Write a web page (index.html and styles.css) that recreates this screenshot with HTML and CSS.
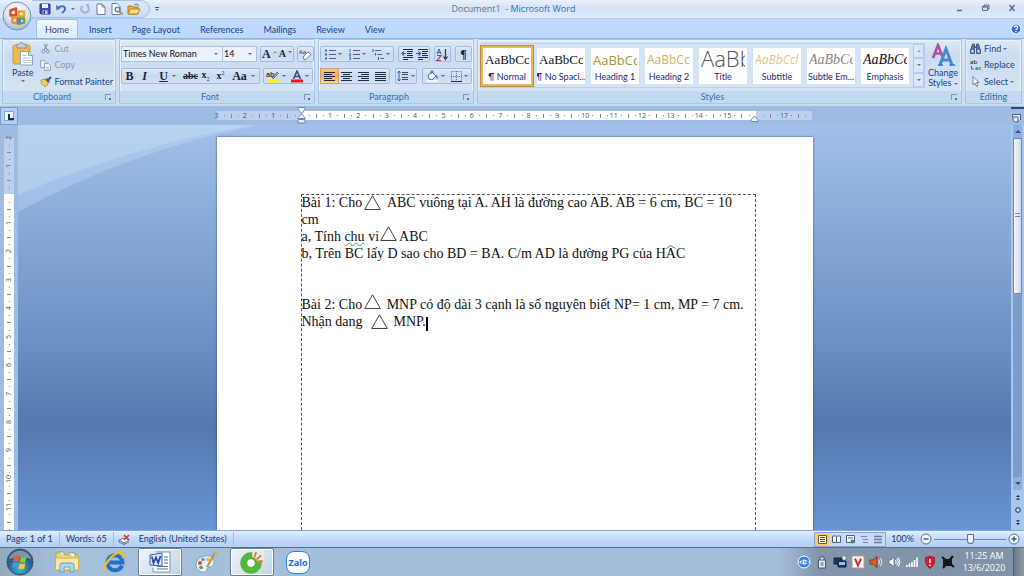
FILE: index.html
```html
<!DOCTYPE html>
<html lang="en">
<head>
<meta charset="utf-8">
<title>Document1 - Microsoft Word</title>
<link rel="stylesheet" href="styles.css">
</head>
<body>
<header class="titlebar">
  <button class="office" aria-label="Office Button">
    <svg width="30" height="30" viewBox="0 0 30 30">
      <defs><radialGradient id="orb" cx=".5" cy=".3" r=".8"><stop offset="0" stop-color="#fff"/><stop offset=".55" stop-color="#dbe2ec"/><stop offset="1" stop-color="#8fa3bf"/></radialGradient></defs>
      <circle cx="15" cy="15" r="14" fill="url(#orb)" stroke="#7890b4"/>
      <g fill="none" stroke-width="2.600" stroke-linejoin="round">
        <path d="M8.500 9.500l5.500-2v6.500l-5.500 .5z" stroke="#dc4f25"/>
        <path d="M16.500 10.500h5.500v5h-5.500z" stroke="#f2a32c"/>
        <path d="M10.500 16.500h4.500v6l-4.500-1z" stroke="#e9902a"/>
        <path d="M16.500 17.500h5.500v4l-5.500 1.500z" stroke="#6aa845"/>
      </g>
      <path d="M15 17l4 1v4l-4 1z" fill="#4b87d0"/>
    </svg>
  </button>
  <div class="quick">
    <button aria-label="Save"><svg width="12" height="12" viewBox="0 0 12 12"><path d="M1 1h10v10H2l-1-1z" fill="#4a4fae" stroke="#2d3184"/><path d="M3 1h6v4H3z" fill="#eef2ff"/><path d="M3.500 7.500h5V11h-5z" fill="#c5cdec"/><path d="M4.500 8h1.500v3H4.500z" fill="#2d3184"/></svg></button>
    <button aria-label="Undo" class="undo"><svg width="12" height="12" viewBox="0 0 12 12"><path d="M3 5c3-3 7-2 7 1 0 2-2 3-3 4" fill="none" stroke="#4470c4" stroke-width="2"/><path d="M1 2l.5 5.500L6 5z" fill="#4470c4"/></svg><i class="caret"></i></button>
    <button aria-label="Repeat"><svg width="12" height="12" viewBox="0 0 12 12"><path d="M3.500 3a3.800 3.800 0 1 0 5 0" fill="none" stroke="#9fb3d2" stroke-width="2"/><path d="M6 1h4v4z" fill="#9fb3d2"/></svg></button>
    <button aria-label="New"><svg width="12" height="12" viewBox="0 0 12 12"><path d="M2 1h5l3 3v7.500H2z" fill="#fff" stroke="#6b7c99"/><path d="M7 1v3h3" fill="none" stroke="#6b7c99"/></svg></button>
    <button aria-label="Print Preview"><svg width="12" height="12" viewBox="0 0 12 12"><path d="M1 .5h5l3 3v8H1z" fill="#fff" stroke="#6b7c99"/><circle cx="6.500" cy="6.500" r="2.500" fill="#cfe3f6" stroke="#3b4d70"/><path d="M8.500 8.500l3 3" stroke="#c08a2b" stroke-width="1.800"/></svg></button>
    <button aria-label="Open"><svg width="14" height="12" viewBox="0 0 14 12"><path d="M1 3h4l1 1h5v7H1z" fill="#e8b33c" stroke="#b57f1d"/><path d="M1 11l2.500-5H13l-2.500 5z" fill="#ffdf7e" stroke="#b57f1d"/><path d="M7 2c2-1.500 4-1 4.500 1" fill="none" stroke="#4470c4"/></svg></button>
  </div>
  <button class="customize" aria-label="Customize Quick Access Toolbar"><i class="caret"></i></button>
  <h1 class="caption">Document1 &nbsp;- <span>Microsoft Word</span></h1>
  <div class="winbtns">
    <button aria-label="Minimize"><svg width="8" height="8" viewBox="0 0 8 8"><path d="M1 6.500h5" stroke="#5c6d88" stroke-width="1.500"/></svg></button>
    <button aria-label="Restore"><svg width="8" height="8" viewBox="0 0 8 8"><path d="M2 2V1h5v4H6M.5 2.500h5v4h-5z" fill="none" stroke="#5c6d88"/><path d="M0 3h6" stroke="#5c6d88"/></svg></button>
    <button aria-label="Close"><svg width="8" height="8" viewBox="0 0 8 8"><path d="M1.500 1l5 6M6.500 1l-5 6" stroke="#5c6d88" stroke-width="1.500"/></svg></button>
  </div>
</header>

<nav class="tabs">
  <button class="tab on">Home</button>
  <button class="tab">Insert</button>
  <button class="tab">Page Layout</button>
  <button class="tab">References</button>
  <button class="tab">Mailings</button>
  <button class="tab">Review</button>
  <button class="tab">View</button>
  <button class="help" aria-label="Help"><svg width="12" height="12" viewBox="0 0 12 12"><circle cx="6" cy="6" r="5" fill="#2f6fd6" stroke="#e8f1fd" stroke-width="1.200"/><path d="M4.300 4.500c0-2 3.400-2 3.400 0C7.700 5.800 6 5.600 6 7M6 8v1.300" fill="none" stroke="#fff" stroke-width="1.300"/></svg></button>
</nav>

<main class="ribbon">
  <section class="group clip">
    <div class="body">
      <button class="big">
        <svg width="22" height="24" viewBox="0 0 22 24"><rect x="1" y="3" width="17" height="19" rx="1.500" fill="#f0b94d" stroke="#cf9433"/><path d="M5 2h2.500l1-1.500h2l1 1.500H14v4H5z" fill="#c9ced6" stroke="#7d8592" stroke-width=".8"/><path d="M8.500 9.500h8l4 4V23h-12z" fill="#fff" stroke="#8b9fc0"/><path d="M16.500 9.500v4h4" fill="#dfe8f5" stroke="#8b9fc0"/><path d="M10.500 13.500h4M10.500 16h8M10.500 18.500h8M10.500 20.500h8" stroke="#a6b9d8" stroke-width=".8"/></svg>
        Paste<i class="caret"></i>
      </button>
      <div class="stack">
        <button class="off"><svg width="12" height="11" viewBox="0 0 12 11"><path d="M4 1l3.500 6M7.500 1L4 7" stroke="#8494ad" stroke-width="1.100" fill="none"/><circle cx="3.500" cy="8.500" r="1.600" fill="none" stroke="#8494ad"/><circle cx="8" cy="8.500" r="1.600" fill="none" stroke="#8494ad"/></svg>Cut</button>
        <button class="off"><svg width="12" height="11" viewBox="0 0 12 11"><path d="M.5.500h4l2 2v5h-6z" fill="#e2eaf4" stroke="#96a6be"/><path d="M4.500 3.500h4l2 2v5h-6z" fill="#eef3f9" stroke="#96a6be"/><path d="M6 7.500h3M6 9h3" stroke="#96a6be" stroke-width=".7"/></svg>Copy</button>
        <button><svg width="12" height="11" viewBox="0 0 12 11"><path d="M1 4l5-1 3 3-3 4.500C3 10 1 8 1 4z" fill="#f3cf5c" stroke="#b48a25" stroke-width=".8"/><path d="M5 3.500L7.500 2 10 5 8 7z" fill="#53658e"/><path d="M8.500 3.500L11 1" stroke="#3b4a74" stroke-width="1.800"/></svg>Format Painter</button>
      </div>
    </div>
    <h2>Clipboard<i class="launch"></i></h2>
  </section>

  <section class="group font">
    <div class="body rows">
      <div class="row">
        <div class="combos">
          <label class="combo name"><select aria-label="Font"><option>Times New Roman</option></select><i class="caret"></i></label>
          <label class="combo size"><select aria-label="Font Size"><option>14</option></select><i class="caret"></i></label>
        </div>
        <div class="set grow"><button class="s ser" aria-label="Grow Font"><b>A</b><i class="caret up blue"></i></button><button class="s ser small" aria-label="Shrink Font"><b>A</b><i class="caret blue"></i></button></div>
        <div class="set"><button class="s" aria-label="Clear Formatting"><svg width="13" height="13" viewBox="0 0 13 13"><text x="0" y="6" font-family="Open Sans" font-size="6" fill="#333">Aa</text><path d="M4 9l5-5 3 2.500-5 5H5z" fill="#fff" stroke="#6a7489" stroke-width=".9"/></svg></button></div>
      </div>
      <div class="row">
        <div class="set fmt">
          <button class="s ser"><b>B</b></button><button class="s ser"><b><em>I</em></b></button><button class="s ser drop"><b><u>U</u></b><i class="caret"></i></button><button class="s ser tiny"><b><s>abc</s></b></button><button class="s ser tiny"><b>x<sub>2</sub></b></button><button class="s ser tiny"><b>x<sup>2</sup></b></button><button class="s ser drop"><b>Aa</b><i class="caret"></i></button>
        </div>
        <div class="set colors">
          <button class="s" aria-label="Text Highlight Color"><svg width="14" height="13" viewBox="0 0 14 13"><text x="0" y="7" font-family="Open Sans" font-size="7" font-weight="600" fill="#222">ab</text><path d="M6 8l5-6 1.500 1.500-5 5z" fill="#8fa1c4" stroke="#4d5f88" stroke-width=".7"/><path d="M1 9.500h12v3H1z" fill="#f7f32a"/></svg><i class="caret"></i></button>
          <button class="s" aria-label="Font Color"><svg width="12" height="13" viewBox="0 0 12 13"><path d="M2.500 9L6 1l3.500 8M3.800 6.500h4.500" fill="none" stroke="#2c4f93" stroke-width="1.600"/><path d="M0 9.500h12v3H0z" fill="#e81c1c"/></svg><i class="caret"></i></button>
        </div>
      </div>
    </div>
    <h2>Font<i class="launch"></i></h2>
  </section>

  <section class="group para">
    <div class="body rows">
      <div class="row">
        <div class="set lists">
          <button class="s" aria-label="Bullets"><svg width="11" height="11" viewBox="0 0 11 11"><path d="M0 1.500h2M0 5.500h2M0 9.500h2" stroke="#3667b8" stroke-width="2"/><path d="M4 1.500h7M4 5.500h7M4 9.500h7" stroke="#55627c"/></svg><i class="caret"></i></button>
          <button class="s" aria-label="Numbering"><svg width="11" height="11" viewBox="0 0 11 11"><path d="M1 0v3M0 4.500h1.500v2H0M0 8h1.500v2.500H0" fill="none" stroke="#3667b8" stroke-width=".9"/><path d="M4 1.500h7M4 5.500h7M4 9.500h7" stroke="#55627c"/></svg><i class="caret"></i></button>
          <button class="s" aria-label="Multilevel List"><svg width="12" height="11" viewBox="0 0 12 11"><path d="M1 0v3M3.500 4v2.500M6.500 8v3" stroke="#3667b8" stroke-width="1.200"/><path d="M3 1.500h6M5.500 5.500H10M8.500 9.500H12" stroke="#55627c"/></svg><i class="caret"></i></button>
        </div>
        <div class="set"><button class="s" aria-label="Decrease Indent"><svg width="12" height="11" viewBox="0 0 12 11"><path d="M2 .5h10M6 2.500h6M6 4.500h5M6 6.500h6M2 8.500h10M2 10.500h5" stroke="#222b3d"/><path d="M5 4.500H1M3 2.500l-2 2 2 2" fill="none" stroke="#2f62bd" stroke-width="1.200"/></svg></button><button class="s" aria-label="Increase Indent"><svg width="12" height="11" viewBox="0 0 12 11"><path d="M2 .5h10M6 2.500h6M6 4.500h5M6 6.500h6M2 8.500h10M2 10.500h5" stroke="#222b3d"/><path d="M0 4.500h4M2.500 2.500l2 2-2 2" fill="none" stroke="#2f62bd" stroke-width="1.200"/></svg></button></div>
        <div class="set"><button class="s" aria-label="Sort"><svg width="13" height="13" viewBox="0 0 13 13"><path d="M1 6l2-5 2 5M1.500 4.500h3" fill="none" stroke="#2f62bd"/><path d="M1 7.500h4l-4 5h4" fill="none" stroke="#a03a5a" stroke-width="1.200"/><path d="M9.500 1v10M7.500 8.500l2 3 2-3" fill="none" stroke="#333c50" stroke-width="1.300"/></svg></button></div>
        <div class="set"><button class="s pil">¶</button></div>
      </div>
      <div class="row">
        <div class="set aligns">
          <button class="s on" aria-label="Align Left"><svg width="11" height="9" viewBox="0 0 11 9"><path d="M0 .5h11M0 2.500h8M0 4.500h11M0 6.500h8M0 8.500h11" stroke="#222b3d"/></svg></button>
          <button class="s" aria-label="Center"><svg width="11" height="9" viewBox="0 0 11 9"><path d="M0 .5h11M2 2.500h7M0 4.500h11M2 6.500h7M0 8.500h11" stroke="#222b3d"/></svg></button>
          <button class="s" aria-label="Align Right"><svg width="11" height="9" viewBox="0 0 11 9"><path d="M0 .5h11M3 2.500h8M0 4.500h11M3 6.500h8M0 8.500h11" stroke="#222b3d"/></svg></button>
          <button class="s" aria-label="Justify"><svg width="11" height="9" viewBox="0 0 11 9"><path d="M0 .5h11M0 2.500h11M0 4.500h11M0 6.500h11M0 8.500h11" stroke="#222b3d"/></svg></button>
        </div>
        <div class="set"><button class="s spacing" aria-label="Line Spacing"><svg width="12" height="12" viewBox="0 0 12 12"><path d="M2 1v10M.5 3L2 1l1.500 2M.5 9L2 11l1.500-2" fill="none" stroke="#2f62bd"/><path d="M5 2.500h6M5 4.500h6M5 7.500h6M5 9.500h6" stroke="#3b4458"/></svg><i class="caret"></i></button></div>
        <div class="set fills">
          <button class="s" aria-label="Shading"><svg width="13" height="12" viewBox="0 0 13 12"><path d="M2 5l4-3 4 4-4 4-3-1z" fill="#eaf0f8" stroke="#5d6c86"/><path d="M5 4V1h2v2" fill="none" stroke="#5d6c86"/><path d="M10 5c2 1 2 3 1.500 4-1-.5-2-2-1.500-4z" fill="#3f6fc0"/><path d="M1 11h11" stroke="#fff" stroke-width="1.500"/></svg><i class="caret"></i></button>
          <button class="s" aria-label="Borders"><svg width="11" height="11" viewBox="0 0 11 11"><path d="M.5.500h10v10M.5.500v10M5.500 0v10M0 5.500h11" fill="none" stroke="#66748e" stroke-dasharray="1 1"/><path d="M0 10.500h11" stroke="#222b3d"/></svg><i class="caret"></i></button>
        </div>
      </div>
    </div>
    <h2>Paragraph<i class="launch"></i></h2>
  </section>

  <section class="group styles">
    <div class="body">
      <div class="gallery">
        <button class="tile on"><span class="pv">AaBbCc</span>¶ Normal</button>
        <button class="tile"><span class="pv">AaBbCc</span>¶ No Spaci...</button>
        <button class="tile"><span class="pv h1">AaBbCc</span>Heading 1</button>
        <button class="tile"><span class="pv h2">AaBbCc</span>Heading 2</button>
        <button class="tile"><span class="pv title">AaBb</span>Title</button>
        <button class="tile"><span class="pv sub">AaBbCcl</span>Subtitle</button>
        <button class="tile"><span class="pv se">AaBbCc</span>Subtle Em...</button>
        <button class="tile"><span class="pv em">AaBbCc</span>Emphasis</button>
        <div class="gscroll"><button aria-label="Up"><i class="caret up"></i></button><button aria-label="Down"><i class="caret"></i></button><button aria-label="More"><i class="caret bar"></i></button></div>
      </div>
      <button class="big change">
        <svg width="24" height="24" viewBox="0 0 24 24"><path d="M2 15L7 2l5 13M4 10.500h6" fill="none" stroke="#b04fa6" stroke-width="2.600"/><path d="M9 22l6-16 6 16M11.500 17h7" fill="none" stroke="#4a86d2" stroke-width="3"/><path d="M7 22h5M18.500 22H24" stroke="#3a70bb" stroke-width="1.500"/></svg>
        <span>Change<br>Styles <i class="caret"></i></span>
      </button>
    </div>
    <h2>Styles<i class="launch"></i></h2>
  </section>

  <section class="group edit">
    <div class="body">
      <div class="stack">
        <button><svg width="12" height="11" viewBox="0 0 12 11"><path d="M1 6l1.500-5h2v9.500H.5V7zM10 6L8.500 1h-2v9.500h4V7z" fill="#5573a8" stroke="#2d4677" stroke-width=".8"/><path d="M4.500 4h2" stroke="#2d4677" stroke-width="1.500"/><path d="M1.500 7h2v2.500h-2zM7.500 7h2v2.500h-2z" fill="#dfe9f7"/></svg>Find <i class="caret"></i></button>
        <button><svg width="12" height="12" viewBox="0 0 12 12"><text x="0" y="5" font-family="Open Sans" font-size="6" font-weight="600" fill="#333">ab</text><text x="5" y="11" font-family="Open Sans" font-size="6" font-weight="600" fill="#2a6a3a">ac</text><path d="M1.500 7v3h2.500" fill="none" stroke="#4066a8"/></svg>Replace</button>
        <button><svg width="12" height="11" viewBox="0 0 12 11"><path d="M3 .5v8.500l2-2 1.500 3.500 1.500-.7L6.500 6.500H9z" fill="#fff" stroke="#6a7489" stroke-width=".9"/></svg>Select <i class="caret"></i></button>
      </div>
    </div>
    <h2>Editing</h2>
  </section>
</main>

<div class="hbar">
  <button class="tabstop" aria-label="Tab selector"><span></span></button>
  <div class="hwrap"><div class="hruler" id="hr"><svg class="ind" width="9" height="17" viewBox="0 0 9 17"><path d="M1 .5h7v2L4.500 6.500 1 2.500zM4.500 7L8 10.500v1H1v-1zM1 12.500h7v3.500H1z" fill="#eef3fa" stroke="#6f84a8"/></svg><svg class="ind right" width="9" height="7" viewBox="0 0 9 7"><path d="M4.500 1L8 4.500v2H1v-2z" fill="#eef3fa" stroke="#6f84a8"/></svg></div></div>
  <button class="vtoggle" aria-label="View Ruler"><svg width="10" height="10" viewBox="0 0 10 10"><path d="M.5 3V.5h8V6M1 3h5v5H3L1 6z" fill="#e6edf8" stroke="#4c5f86"/></svg></button>
</div>

<div class="work">
  <div class="vruler" id="vr"></div>
  <div class="canvas">
    <svg class="swoosh" width="420" height="100" viewBox="0 0 420 100"><path d="M0 0H240Q110 26 0 87z" fill="#c9dcf5" fill-opacity=".35"/><path d="M0 0H235Q110 22 0 70z" fill="#c9dcf5" fill-opacity=".4"/></svg>
    <article class="page">
      <div class="textarea">
        <p class="first">Bài 1: Cho<svg class="tri" viewBox="0 0 17 15"><path d="M.7 14.500L8.500.800l7.800 13.700z"/></svg> ABC vuông tại A. AH là đường cao AB. AB = 6 cm, BC = 10 cm</p>
        <p>a, Tính <span class="gram">chu</span> vi<svg class="tri high" viewBox="0 0 17 15"><path d="M.7 14.500L8.500.800l7.800 13.700z"/></svg>ABC</p>
        <p>b, Trên BC lấy D sao cho BD = BA. C/m AD là đường PG của H<span class="hat">A<svg width="10" height="4" viewBox="0 0 10 4"><path d="M.5 3.500L4.500.500l5 3" fill="none" stroke="#444" stroke-width=".8"/></svg></span>C</p>
        <p class="gap">Bài 2: Cho<svg class="tri high near" viewBox="0 0 17 15"><path d="M.7 14.500L8.500.800l7.800 13.700z"/></svg> MNP có độ dài 3 cạnh là số nguyên biết NP= 1 cm, MP = 7 cm. Nhận dang <svg class="tri wide" viewBox="0 0 17 15"><path d="M.7 14.500L8.500.800l7.800 13.700z"/></svg> MNP.<span class="cursor"></span></p>
      </div>
    </article>
  </div>
  <div class="vscroll">
    <button aria-label="Scroll up"><i class="caret up dark"></i></button>
    <div class="track"><div class="thumb"></div></div>
    <button aria-label="Scroll down"><i class="caret dark"></i></button>
    <div class="browse">
      <button aria-label="Previous Page"><svg width="4" height="6" viewBox="0 0 6 8"><path d="M0 4l3-3 3 3zM0 8l3-3 3 3z" fill="#16264a"/></svg></button>
      <button aria-label="Select Browse Object"><svg width="6" height="6" viewBox="0 0 6 6"><circle cx="3" cy="3" r="2.300" fill="#cddbf0" stroke="#16264a"/></svg></button>
      <button aria-label="Next Page"><svg width="4" height="6" viewBox="0 0 6 8"><path d="M0 0l3 3 3-3zM0 4l3 3 3-3z" fill="#16264a"/></svg></button>
    </div>
  </div>
</div>

<footer class="status">
  <button>Page: 1 of 1</button><button>Words: 65</button>
  <button aria-label="Proofing"><svg width="13" height="11" viewBox="0 0 13 11"><path d="M1 6l5 3 5-3-4-2z" fill="#fff" stroke="#5f76a3"/><path d="M1 6v2l5 2.500V9M6 10.500L11 8" fill="none" stroke="#5f76a3"/><path d="M6 1l5 5M11 1L6 6" stroke="#d93a2e" stroke-width="1.700"/></svg></button>
  <button class="lang">English (United States)</button>
  <div class="views">
    <button class="on" aria-label="Print Layout"><svg width="9" height="9" viewBox="0 0 9 9"><path d="M.5.500h8v8h-8z" fill="#fff" stroke="#6b5a30"/><path d="M2 2.500h5M2 4.500h5M2 6.500h5" stroke="#6b5a30"/></svg></button>
    <button aria-label="Full Screen Reading"><svg width="9" height="9" viewBox="0 0 9 9"><path d="M.5 1h3.500l.5.500.5-.5h3.500v6.500H5l-.5.500L4 7.500H.5zM4.500 1.500V8" fill="#fff" stroke="#4a5f88"/></svg></button>
    <button aria-label="Web Layout"><svg width="9" height="9" viewBox="0 0 9 9"><path d="M.5.500h8v7h-8z" fill="#fff" stroke="#4a5f88"/><path d="M2 3h5" stroke="#4a5f88"/><circle cx="6.500" cy="6.500" r="2" fill="#3f8a76"/></svg></button>
    <button aria-label="Outline"><svg width="9" height="9" viewBox="0 0 9 9"><path d="M1 1.500h6M3 4.500h5M3 7.500h5" stroke="#7a8aa8" stroke-width="1.200"/></svg></button>
    <button aria-label="Draft"><svg width="9" height="9" viewBox="0 0 9 9"><path d="M0 1.500h8M0 4.500h8M0 7.500h8" stroke="#6c7b98" stroke-width="1.400"/></svg></button>
  </div>
  <button class="pct">100%</button>
  <button class="zb" aria-label="Zoom out"><svg width="12" height="12" viewBox="0 0 12 12"><circle cx="6" cy="6" r="5" fill="#eef4fc" stroke="#566f9c"/><path d="M3.500 6h5" stroke="#3c547f" stroke-width="1.400"/></svg></button>
  <input class="zoom" type="range" aria-label="Zoom" min="0" max="100" value="50">
  <button class="zb" aria-label="Zoom in"><svg width="12" height="12" viewBox="0 0 12 12"><circle cx="6" cy="6" r="5" fill="#eef4fc" stroke="#566f9c"/><path d="M3.500 6h5M6 3.500v5" stroke="#3c547f" stroke-width="1.400"/></svg></button>
</footer>

<div class="taskbar">
  <button class="app start" aria-label="Start"><svg width="28" height="28" viewBox="0 0 28 28"><defs><radialGradient id="st" cx=".5" cy=".75" r=".75"><stop offset="0" stop-color="#49b4d8"/><stop offset=".6" stop-color="#25608f"/><stop offset="1" stop-color="#3f5f80"/></radialGradient></defs><circle cx="14" cy="14" r="13" fill="url(#st)" stroke="#30516f"/><path d="M3 11a11.500 11.500 0 0 1 22 0q-11-4-22 0z" fill="#fff" fill-opacity=".35"/><path d="M8 8.500q3-2 5.500-.5l-1 5.500q-3-1.300-5.500.3z" fill="#e8622c"/><path d="M14.700 8.500q2.800 1.400 5.800 0l-1 5.500q-2.900 1.300-5.700-.2z" fill="#8cc63e"/><path d="M6.800 15q2.700-1.500 5.400-.2l-1 5.200q-2.500-1.400-5.300.1z" fill="#3f9be0"/><path d="M13.500 15.200q3 1.400 5.800.1l-1 5.200q-2.900 1.400-5.700-.1z" fill="#fbc62f"/></svg></button>
  <button class="app" aria-label="Explorer"><svg width="26" height="24" viewBox="0 0 26 24"><path d="M2 3h8l1 2h13v15H2z" fill="#f0d77c" stroke="#c5a24a"/><path d="M4 2h6v3M13 3h8v4" fill="#fff" stroke="#7fa87a"/><path d="M1.500 8h23v12h-23z" fill="#fbe9a3" stroke="#d0b057"/><path d="M6 22v-7q0-2 2-2h10q2 0 2 2v7h-4v-5h-6v5z" fill="#a9d8f0" stroke="#5fa6cc"/></svg></button>
  <button class="app" aria-label="Internet Explorer"><svg width="24" height="24" viewBox="0 0 24 24"><path d="M20 15.500a7.500 7.500 0 1 1 .5-3H8" fill="none" stroke="#2370c4" stroke-width="4"/><path d="M3 21.500C-1 17 12 1 20 2.500c2.500.5 1.500 4 .5 5.500" fill="none" stroke="#f2bd2e" stroke-width="2.200"/></svg></button>
  <button class="app run" aria-label="Microsoft Word"><svg width="24" height="24" viewBox="0 0 24 24"><path d="M8 2h14v20H5v-4" fill="#fff" stroke="#7a92bd"/><path d="M16 7h4M16 10h4M16 13h4M9 16.500h11M9 19h11" stroke="#4a70b5" stroke-width="1.200"/><path d="M2 5l12-2v13L2 15z" fill="#dbe6f7" stroke="#3c5fa8"/><path d="M3.800 6.500L5.500 13 8 7.500l2.200 5.500L12.500 6" fill="none" stroke="#25479a" stroke-width="1.700"/></svg></button>
  <button class="app" aria-label="Paint"><svg width="24" height="24" viewBox="0 0 24 24"><path d="M11 6c6-1 10 2 9 7-.6 4-4 4-5 4-2 0-1.500 4-4 5-4 1-9-2-9-7 0-5 4-8.500 9-9z" fill="#e6edf5" stroke="#8ba0b8"/><circle cx="6" cy="13" r="2" fill="#d94a3c"/><circle cx="9" cy="9.500" r="1.800" fill="#4a9be0"/><circle cx="14" cy="9.500" r="1.800" fill="#f0b62e"/><circle cx="7" cy="17.500" r="1.800" fill="#52a04a"/><path d="M13 17L21 3" stroke="#c68a45" stroke-width="2"/><path d="M20 5l1-4 2.500 1L22 6z" fill="#d8a860"/></svg></button>
  <button class="app run" aria-label="Cốc Cốc"><svg width="24" height="24" viewBox="0 0 24 24"><circle cx="11" cy="13" r="8" fill="#fff" stroke="#55b53f" stroke-width="5.500"/><path d="M12 10L12.500 0H24v10l-9 1z" fill="#e9efe9"/><circle cx="11" cy="13" r="5" fill="#fff" stroke="#55b53f" stroke-width="2.500"/><path d="M14.500 7.500L16 2M16.500 9.500L21 5.500M17.500 12l5-1" stroke="#f0733a" stroke-width="1.900"/></svg></button>
  <button class="app zalo"><span>Zalo</span></button>
  <div class="tray">
    <svg width="14" height="14" viewBox="0 0 14 14"><circle cx="7" cy="7" r="6" fill="#2e86e8" stroke="#fff" stroke-width="1"/><path d="M2 7q5-5 10 0-5 5-10 0z" fill="#fff"/><path d="M4 6h2L4 8h2M7.500 6v2M9 6.500h1.500v1.500H9z" fill="none" stroke="#2e6fd0" stroke-width=".8"/></svg>
    <svg width="14" height="14" viewBox="0 0 14 14"><path d="M5 5V2h4v3M3.500 5h7v8h-7z" fill="#e9eef4" stroke="#4b5664"/><path d="M5.500 8h3M5.500 10h3" stroke="#4b5664"/></svg>
    <svg width="14" height="14" viewBox="0 0 14 14"><path d="M1 3h8v6H1zM5 6h8v6H5z" fill="#173a66" stroke="#10233d"/><path d="M6 7h6v3H6z" fill="#8ec6ee"/><path d="M11 1v4M9 3h4" stroke="#fff"/></svg>
    <svg width="14" height="14" viewBox="0 0 14 14"><path d="M1 1h12v12H1z" fill="#fff" stroke="#c8908c"/><path d="M4 3.500l3 7 3-7" fill="none" stroke="#cf2f2a" stroke-width="2"/></svg>
    <svg width="14" height="14" viewBox="0 0 14 14"><path d="M1 5h3l4-3.500v11L4 9H1z" fill="#d8622a" stroke="#6d3115" stroke-width=".8"/><path d="M9.500 4.500q2 2.500 0 5M11.500 3q3 4 0 8" fill="none" stroke="#f6e9df"/></svg>
    <svg width="14" height="14" viewBox="0 0 14 14"><path d="M2 5h2l3-3v10L4 9H2z" fill="#fff" stroke="#56657a" stroke-width=".7"/><path d="M8.500 5q1.500 2 0 4M10 3.500q2.800 3.500 0 7M11.500 2.500q3 4.500 0 9" fill="none" stroke="#fff"/></svg>
    <svg width="14" height="14" viewBox="0 0 14 14"><path d="M2 12v-2M4.500 12V8.500M7 12V7M9.500 12V5M12 12V2.500" stroke="#fff" stroke-width="1.600"/></svg>
    <svg width="14" height="14" viewBox="0 0 14 14"><path d="M7 1q3 1 4.500 1.500Q12.500 10 7 13.500 1.500 10 2.500 2.500 4 2 7 1z" fill="#d81f2a" stroke="#8d131b" stroke-width=".7"/><path d="M7 4v4M7 9.500V11" stroke="#fff" stroke-width="1.500"/></svg>
    <svg width="14" height="14" viewBox="0 0 14 14"><path d="M2 4h9v7H2z" fill="#15181d"/><path d="M1 2l12 10M12 1L2 13" stroke="#15181d" stroke-width="2.200"/></svg>
  </div>
  <div class="clock"><time>11:25 AM</time><time>13/6/2020</time></div>
  <button class="desk" aria-label="Show desktop"></button>
</div>
<script src="rulers.js"></script>
</body>
</html>
```
FILE: rulers.js
```js
// Each ruler cell is a quarter of a centimetre; whole centimetres carry a number.
function fill(el, from, to, start, end) {
  for (let q = from; q < to; q++) {
    const cell = document.createElement('span');
    const rest = ((q % 4) + 4) % 4;
    if (q >= start && q < end) cell.className = 'in';
    const mark = document.createElement('b');
    if (rest === 0) {
      mark.textContent = q === 0 || q === 64 ? '' : Math.abs(q / 4);
    } else {
      mark.className = rest === 2 ? 'half' : 'dot';
    }
    cell.append(mark);
    el.append(cell);
  }
}
fill(document.getElementById('hr'), -12, 72, 0, 64);
fill(document.getElementById('vr'), -8, 48, 0, 48);
```
FILE: styles.css
```css
* { box-sizing: border-box; }
html, body { height: 100%; }
body {
  margin: 0;
  display: flex;
  flex-direction: column;
  overflow: hidden;
  font-family: Lato, "Noto Sans", sans-serif;
  font-size: 9px;
  line-height: 10px;
  color: #15428b;
  background: #bfdbff;
}
button, select {
  font: inherit;
  color: inherit;
  background: none;
  border: 0;
  padding: 0;
  margin: 0;
}
svg { display: block; flex: none; }
h1, h2, p { margin: 0; font-weight: 400; }

.caret {
  display: inline-block;
  flex: none;
  border: 2px solid transparent;
  border-top-color: #55719f;
  border-bottom-width: 0;
}
.caret.up { border-top-width: 0; border-bottom: 2px solid #8a9bb8; }
.caret.dark { border-width: 3px 3px 0; border-top-color: #33507f; }
.caret.up.dark { border-width: 0 3px 3px; border-bottom-color: #33507f; }
.caret.blue { align-self: flex-start; margin-top: 4px; }

/* Title bar */
.titlebar {
  position: relative;
  display: flex;
  align-items: center;
  height: 19px;
  flex: none;
  background: linear-gradient(#e9f1fc, #d3e3f8 45%, #dfeafb);
  border-bottom: 1px solid #b4cef0;
}
.office { position: absolute; left: 2px; top: 1px; z-index: 2; }
.quick {
  display: flex;
  align-items: center;
  gap: 4px;
  height: 18px;
  margin-left: 32px;
  padding: 0 8px 0 7px;
  border: 1px solid #a9c3e6;
  border-left: 0;
  border-radius: 0 9px 9px 0;
  background: linear-gradient(#dce9fa, #c9dcf5);
}
.undo { display: flex; align-items: center; gap: 4px; }
.customize { margin-left: 5px; padding-top: 1px; border-top: 1px solid #33507f; display: flex; }
.caption {
  flex: 1;
  text-align: center;
  font-family: "Open Sans", sans-serif;
  font-size: 9px;
  line-height: 12px;
  color: #6a7384;
  padding-right: 88px;
}
.caption span { color: #3b6cb4; }
.winbtns { display: flex; gap: 18px; padding: 0 8px 2px 0; }

/* Tabs */
.tabs {
  display: flex;
  height: 19px;
  flex: none;
  padding-left: 36px;
  background: #bfd9fe;
}
.tab { padding: 2px 10px 0; }
.tab.on {
  margin-right: 1px;
  padding: 1px 8px 0;
  background: linear-gradient(#f4f9ff, #dce9f7);
  border: 1px solid #9cbde9;
  border-bottom: 0;
  border-radius: 3px 3px 0 0;
}
.help { margin: 0 2px 0 auto; }

/* Ribbon */
.ribbon {
  display: flex;
  gap: 3px;
  flex: none;
  padding: 0 2px 2px;
  background: linear-gradient(#dbe8f7, #c6daf1);
  border-top: 1px solid #8db2e3;
}
.group {
  display: flex;
  flex-direction: column;
  flex: none;
  border: 1px solid #a5c4e3;
  border-bottom-color: #9bd0dd;
  border-radius: 2px;
  background: linear-gradient(#dde9f6, #cadcf0 25%, #d8e6f6);
  box-shadow: inset 0 0 0 1px #eaf2fb;
}
.group .body { display: flex; height: 51px; padding: 2px; }
.group h2 {
  position: relative;
  font-size: 9px;
  line-height: 12px;
  text-align: center;
  color: #3e6aaa;
  background: #c2d9f1;
}
.launch {
  position: absolute;
  right: 4px;
  top: 3px;
  width: 6px;
  height: 6px;
  border: 1px solid #7c96bd;
  border-right: 0;
  border-bottom: 0;
  background: linear-gradient(#4d6ea3, #4d6ea3) 3px 3px / 3px 3px no-repeat;
}
.clip { width: 114px; }
.clip h2 { padding-right: 14px; }
.font { width: 196px; }
.font h2 { padding-right: 14px; }
.para { width: 156px; }
.para h2 { padding-right: 14px; }
.styles { flex: 1; min-width: 0; }
.styles h2 { padding-right: 14px; }
.edit { width: 57px; }
.big {
  display: flex;
  flex-direction: column;
  align-items: center;
  gap: 2px;
  width: 36px;
}
.stack {
  display: flex;
  flex-direction: column;
  justify-content: space-between;
  align-items: flex-start;
  padding-bottom: 1px;
}
.edit .stack { padding-left: 2px; }
.stack button { display: flex; align-items: center; gap: 2px; height: 13px; white-space: nowrap; }
.off { color: #8c99ad; }

.rows { flex-direction: column; gap: 6px; }
.group .rows { padding: 6px 1px 0; }
.row { display: flex; justify-content: space-between; gap: 3px; height: 16px; }
.set {
  display: flex;
  border: 1px solid #a3bbdc;
  border-radius: 2px;
  background: linear-gradient(#dfeaf7, #c8daf0 50%, #d3e2f4);
}
.s { display: flex; align-items: center; justify-content: center; gap: 2px; min-width: 15px; padding: 0 1px; color: #1e2534; }
.ser { font-family: "Liberation Serif", serif; font-size: 12px; }
.ser sup, .ser sub { font-size: 6px; line-height: 6px; color: #2f62bd; }
.small, .tiny { font-size: 10px; }
.fmt { flex: 1; }
.fmt .s { flex: 1; }
.fmt .drop { flex: 2 0 12px; gap: 4px; }
.colors .s, .lists .s, .fills .s { width: 24px; }
.aligns .s { width: 17px; }
.spacing { width: 20px; }
.s.on { background: linear-gradient(#fcc679, #fda94a 50%, #fed78a); box-shadow: 0 0 0 1px #c9a267; }
.pil { font-family: "Liberation Serif", serif; font-size: 12px; font-weight: 700; }
.combos { display: flex; }
.combo {
  display: flex;
  align-items: center;
  padding: 0 4px 0 1px;
  background: #eaf3fd;
  border: 1px solid #abc1de;
  color: #111;
}
.combo select { appearance: none; flex: 1; min-width: 0; color: #111; }
.name { width: 102px; }
.size { width: 34px; border-left: 0; }

.styles .body { gap: 1px; padding-right: 1px; }
.gallery {
  display: flex;
  flex: 1;
  min-width: 0;
  align-items: center;
  margin: 1px 0;
  border: 1px solid #b9d0ed;
  border-left: 0;
  background: #d5e4f5;
}
.tile {
  flex: 1;
  min-width: 0;
  height: 36px;
  margin: 0 3px;
  overflow: hidden;
  white-space: nowrap;
  display: flex;
  flex-direction: column;
  align-items: center;
  background: #fff;
  color: #1f2a6b;
}
.tile.on { margin: 0; height: 42px; flex: 1 0 6px; border: 3px solid #f0b850; outline: 1px solid #b9884e; outline-offset: -1px; }
.pv {
  align-self: stretch;
  height: 24px;
  margin: 0 2px;
  overflow: hidden;
  text-align: left;
  font-family: "Liberation Serif", serif;
  font-size: 13px;
  line-height: 24px;
  color: #111;
}
.pv.h1, .pv.h2 { font-family: "Open Sans", sans-serif; font-size: 13px; color: #a89535; }
.pv.h2 { font-size: 12px; color: #cdb560; }
.pv.title { font-family: "Open Sans", sans-serif; font-weight: 300; font-size: 22px; line-height: 20px; color: #555; }
.pv.sub { font-family: "Open Sans", sans-serif; font-style: italic; font-size: 12px; color: #d8c98a; }
.pv.se, .pv.em { font-style: italic; font-size: 14px; }
.pv.se { color: #888; }
.gscroll { display: flex; flex-direction: column; width: 11px; align-self: stretch; margin-left: 1px; }
.gscroll button { flex: 1; display: flex; align-items: center; justify-content: center; border: 1px solid #b3cae8; background: #d9e7f7; }
.caret.bar { box-shadow: 0 -3px 0 -1px #55719f; }
.change { width: 34px; padding-top: 1px; gap: 1px; line-height: 10px; }
.change .caret { vertical-align: middle; }

/* Rulers */
.hbar {
  display: flex;
  align-items: center;
  height: 19px;
  flex: none;
  background: #9ebce2;
}
.tabstop { width: 18px; height: 18px; padding: 3px; border: 1px solid #7b9bcd; background: #b5cdee; }
.tabstop span { display: block; height: 10px; background: #eef4fc; border: 1px solid #8ba4ca; }
.tabstop span::after { content: ""; display: block; width: 4px; height: 4px; margin: 2px 3px; border-left: 2px solid #222c44; border-bottom: 2px solid #222c44; }
.hwrap { flex: 1; display: flex; justify-content: center; }
.vtoggle { width: 13px; height: 17px; border-top: 2px solid #34496f; padding: 4px 1px 0; }
.hruler { position: relative; display: flex; width: 596px; max-width: 100%; height: 9px; }
.hruler > span, .vruler > span { flex: 1 0 0; min-width: 0; display: flex; align-items: center; background: #bdd1ee; }
.hruler > span.in, .vruler > span.in { background: #fff; }
.hruler b, .vruler b { font-family: "Open Sans", sans-serif; font-size: 7px; line-height: 8px; font-weight: 400; color: #4a5872; width: 12px; margin: 0 -6px; flex: none; text-align: center; z-index: 1; }
.hruler b.half { width: 1px; height: 4px; margin: 0; background: #7c89a2; }
.hruler b.dot { width: 1px; height: 1px; margin: 0; background: #7c89a2; }
.ind { position: absolute; left: 80px; top: -4px; z-index: 2; }
.ind.right { left: auto; right: 54px; top: 4px; }

.work { display: flex; flex: 1; min-height: 0; }
.vruler {
  width: 18px;
  flex: none;
  display: flex;
  flex-direction: column;
  padding: 13px 4px 0;
  background: #9ebce2;
  overflow: hidden;
}
.vruler > span { flex: 0 0 7px; justify-content: center; align-items: flex-start; }
.vruler > span:nth-child(9n) { flex-basis: 8px; }
.vruler b { writing-mode: vertical-rl; transform: rotate(180deg); width: 8px; height: 10px; margin: -5px 0; }
.vruler b.half { width: 4px; height: 1px; margin: 0; background: #7c89a2; }
.vruler b.dot { width: 1px; height: 1px; margin: 0; background: #7c89a2; }

.canvas {
  position: relative;
  flex: 1;
  min-width: 0;
  display: flex;
  justify-content: center;
  padding-top: 12px;
  background: linear-gradient(#a1c0e9, #6c91c4 53%, #5479ae 74%, #6a94d5);
  overflow: hidden;
}
.swoosh { position: absolute; left: 0; top: 0; }
.page {
  position: relative;
  width: 596px;
  max-width: 100%;
  padding: 57px 57px 0 84px;
  background: #fff;
  box-shadow: 0 0 2px #2f4a78;
}
.textarea {
  height: 100%;
  border: 1px dashed #555;
  border-bottom: 0;
  font-family: "Liberation Serif", serif;
  font-size: 14px;
  line-height: 17px;
  color: #111;
}
.textarea p { padding-right: 8px; }
.textarea .first { margin-top: -1px; }
.tri { display: inline-block; width: 17px; height: 15px; margin: -5px 3px 0 2px; vertical-align: -3px; fill: none; stroke: #444; stroke-width: 1; }
.tri.high { vertical-align: 0; margin: -5px 2px 0 1px; }
.tri.near { margin-left: 2px; }
.tri.wide { margin: -5px 2px 0 5px; }
.gap { padding-top: 34px; }
.gram { text-decoration: underline wavy #3f9a4c 1px; text-underline-offset: 1px; }
.hat { position: relative; }
.hat svg { position: absolute; left: 0; top: -1px; }
.cursor { display: inline-block; width: 2px; height: 14px; margin: -2px 0; vertical-align: -3px; background: #000; }

.vscroll {
  display: flex;
  flex-direction: column;
  width: 13px;
  flex: none;
  padding: 0 2px;
  background: #a9c6ef;
}
.vscroll > button { height: 13px; display: flex; align-items: center; justify-content: center; background: #8fafdc; }
.track { flex: 1; background: #7d9cca; }
.thumb {
  height: 46%;
  border: 1px solid #6f87ad;
  border-radius: 1px;
  background:
    repeating-linear-gradient(#7286a8 0 1px, transparent 1px 3px) center / 5px 5px no-repeat,
    linear-gradient(90deg, #f5f8fd, #cdd8e9);
}
.browse { display: flex; flex-direction: column; align-items: center; gap: 7px; padding: 4px 0; }

/* Status bar */
.status {
  display: flex;
  align-items: center;
  height: 17px;
  flex: none;
  padding-right: 4px;
  border-top: 1px solid #86a5d3;
  background: linear-gradient(#e2eefd, #c3daf8 45%, #b3cff5);
  color: #1d3a70;
}
.status > button { padding: 0 6px; height: 14px; white-space: nowrap; }
.status > button:nth-child(-n+2), .status > .lang { border-right: 1px solid #a0bde5; }
.status > button:nth-child(3) { padding: 1px 4px; }
.status > .lang { padding-left: 4px; }
.status > .pct { padding-left: 5px; }
.views { display: flex; margin-left: auto; border: 1px solid #8aa6d0; background: #c7dbf6; }
.views button { width: 14px; height: 13px; padding: 2px 3px; }
.views .on { background: #fbc872; }
.status > .zb { padding: 1px 0; }
.zoom { appearance: none; width: 72px; height: 12px; margin: 0 2px; background: linear-gradient(#6c86b3, #6c86b3) center / 100% 1px no-repeat; }
.zoom::-webkit-slider-thumb { appearance: none; width: 7px; height: 10px; border: 1px solid #566f9c; border-radius: 1px 1px 4px 4px; background: #eef4fc; }

/* Taskbar */
.taskbar {
  display: flex;
  align-items: center;
  height: 29px;
  flex: none;
  border-top: 1px solid #5b6f88;
  background: linear-gradient(90deg, #94a9c0, #a6bfda 6%, #a3bedb 76%, #8195ab 80%, #7f92a8);
}
.app { width: 44px; height: 28px; margin-right: 2px; display: flex; align-items: center; justify-content: center; }
.app:nth-child(2) { margin-right: 3px; }
.start { width: 40px; margin-right: 5px; }
.run { background: linear-gradient(135deg, #eef4fa, #c3d3e4); border: 1px solid #6d7f95; border-radius: 2px; box-shadow: inset 0 0 0 1px #fff; }
.zalo span { width: 24px; height: 23px; border-radius: 8px; background: #fff; border: 1px solid #2d7fe6; color: #1665e0; font-family: "Open Sans", sans-serif; font-weight: 700; font-size: 9px; line-height: 21px; }
.tray { display: flex; gap: 4px; margin-left: auto; }
.clock { width: 58px; display: flex; flex-direction: column; text-align: center; font-family: "Open Sans", sans-serif; font-size: 9px; line-height: 12px; color: #fff; }
.desk { width: 11px; align-self: stretch; border-left: 1px solid #4e5c6d; background: linear-gradient(90deg, #6b7989, #8d9aab); }
```
